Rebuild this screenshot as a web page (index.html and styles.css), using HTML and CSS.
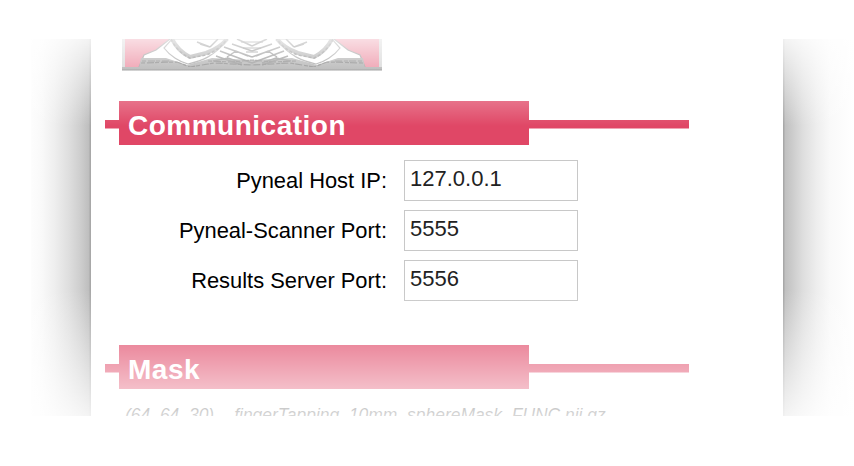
FILE: index.html
```html
<!DOCTYPE html>
<html lang="en">
<head>
<meta charset="utf-8">
<title>Pyneal Setup</title>
<link rel="stylesheet" href="styles.css">
</head>
<body>
<main class="frame">
  <div class="shadow shadow-left"></div>
  <div class="panel">
    <svg class="logo" width="260" height="33" viewBox="0 0 260 33">
      <defs>
        <filter id="soft" x="-5%" y="-10%" width="110%" height="120%"><feGaussianBlur stdDeviation="0.7"/></filter>
        <g id="half">
          <path d="M0 0H3V31H0Z" fill="#bbb"/>
          <path d="M3 0H48L34 11L22 16L17 29H3Z" fill="#e04766"/>
          <g filter="url(#soft)" fill="none" stroke="#666" stroke-width="1.2">
            <path d="M48 0L34 11L22 16L17 28" stroke="#555"/>
            <path d="M19 19L44 19L65 26L90 19L130 21V30H17Z" fill="#777" stroke="none"/>
            <path d="M42 9C48 17 58 23 66 25C79 22 92 18 106 0H50Z" fill="#fff"/>
            <path d="M50 0C54 8 60 14 68 18L84 14C95 10 101 5 105 0" stroke="#777" stroke-width="4"/>
            <path d="M49 0C53 9 61 16 68 19L84 16C95 12 101 6 105 0" stroke="#444" stroke-width="1.5" stroke-dasharray="3 2"/>
            <path d="M75 3L88 8L78 5M88 8L96 0M102 8L130 18M98 12L130 24M94 17L120 26M110 5L130 12M115 0L130 7M105 18L114 12L126 17M91 22L106 19L120 24" stroke="#444" stroke-width="1.5"/>
            <path d="M19 24L55 23L68 28L92 24L130 26M20 22H48M86 22L110 23L130 21" stroke="#333" stroke-dasharray="4 2 7 1"/>
            <path d="M0 29.5H130" stroke="#777" stroke-width="3"/>
            <path d="M0 31H130" stroke="#444"/>
            <path d="M119 3H130M121 9H130M124 13H130" stroke="#333"/>
          </g>
        </g>
      </defs>
      <use href="#half"/>
      <use href="#half" transform="translate(260 0) scale(-1 1)"/>
    </svg>
    <section class="section">
      <h2 class="heading"><span class="heading-label">Communication</span></h2>
      <form class="fields">
        <label for="host">Pyneal Host IP:</label><input id="host" value="127.0.0.1">
        <label for="scanner">Pyneal-Scanner Port:</label><input id="scanner" value="5555">
        <label for="results">Results Server Port:</label><input id="results" value="5556">
      </form>
    </section>
    <section class="section">
      <h2 class="heading"><span class="heading-label">Mask</span></h2>
      <p class="mask-info"><span>(64, 64, 30)</span><span>fingerTapping_10mm_sphereMask_FUNC.nii.gz</span></p>
    </section>
  </div>
  <div class="shadow shadow-right"></div>
  <div class="fade fade-top"></div>
  <div class="fade fade-bottom"></div>
</main>
</body>
</html>
```
FILE: styles.css
```css
* { box-sizing: border-box; }
body {
  margin: 0;
  padding-top: 39px;
  background: #fff;
  color: #000;
  font-family: "Liberation Sans", Arial, sans-serif;
}
.frame {
  position: relative;
  display: flex;
  width: 854px;
  height: 377px;
  padding-left: 31px;
  overflow: hidden;
}
.shadow { flex: none; }
.shadow-left {
  width: 60px;
  background: linear-gradient(to left, #a8a8a8 0 1px, #bebebe 2px, #cdcdcd 10px, #dedede 22px, #eee 36px, #f9f9f9 49px, #fdfdfd);
}
.shadow-right {
  width: 71px;
  background: linear-gradient(to right, #a8a8a8 0 1px, #c0c0c0 2px, #cdcdcd 10px, #dedede 20px, #eee 34px, #f9f9f9 47px, #fff);
}
.panel {
  flex: none;
  width: 692px;
  height: 377px;
  padding-left: 14px;
  overflow: hidden;
}
.logo { display: block; margin-left: 17px; }
.section { width: 583.5px; }
.logo + .section { margin-top: 29px; }
.section + .section { margin-top: 44px; }
.heading {
  height: 44px;
  margin: 0;
  padding-left: 14px;
  background: linear-gradient(#e04766, #e04766) 0 18.5px / 100% 8.5px no-repeat;
  font-size: 28px;
  line-height: 50px;
}
.heading-label {
  display: block;
  width: 410px;
  height: 44px;
  padding-left: 9px;
  background: #e04766;
  color: #fff;
  letter-spacing: 0.5px;
}
.fields {
  display: grid;
  grid-template-columns: 282px 174px;
  grid-auto-rows: 41px;
  column-gap: 17px;
  row-gap: 9px;
  margin: 15px 0 0;
}
.fields label {
  font-size: 21.9px;
  line-height: 42px;
  text-align: right;
  white-space: nowrap;
}
.fields input {
  width: 174px;
  height: 41px;
  padding: 0 5px 4px;
  border: 1px solid #c8c8c8;
  border-radius: 0;
  background: #fff;
  color: #222;
  font: 22px "Liberation Sans", Arial, sans-serif;
}
.mask-info {
  display: flex;
  gap: 20px;
  margin: 16px 0 0 20px;
  color: #111;
  font-size: 17.45px;
  font-style: italic;
  line-height: 20px;
  white-space: nowrap;
}
.fade { position: absolute; left: 0; right: 0; }
.fade-top {
  top: 0;
  height: 87px;
  background: linear-gradient(rgba(255,255,255,.82), rgba(255,255,255,0));
}
.fade-bottom {
  bottom: 0;
  height: 126px;
  background: linear-gradient(rgba(255,255,255,0), rgba(255,255,255,.83));
}
```
